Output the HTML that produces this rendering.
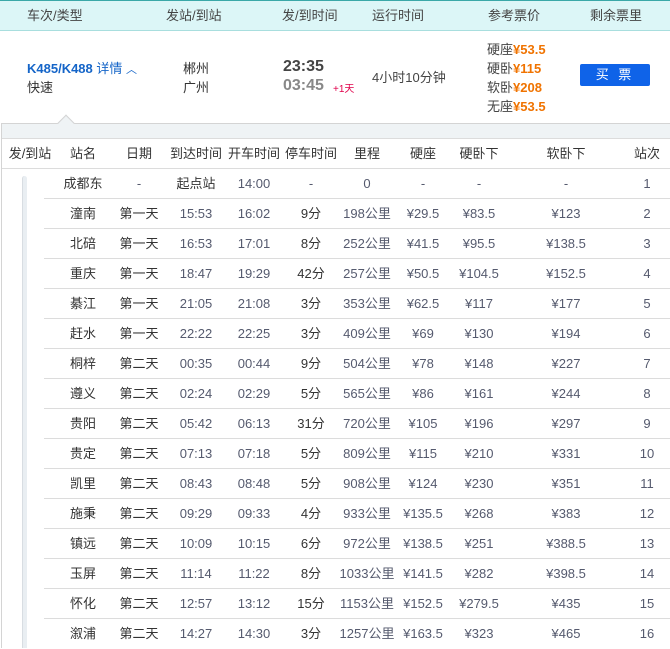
<!DOCTYPE html>
<html><head><meta charset="utf-8"><style>
*{margin:0;padding:0;box-sizing:border-box}
body{width:670px;height:648px;overflow:hidden;background:#fff;font-family:"Liberation Sans","Noto Sans CJK SC",sans-serif;font-size:13px;color:#333;position:relative}
.a{position:absolute;white-space:nowrap;line-height:19px}
.hd{position:absolute;left:0;top:0;width:670px;height:31px;background:#dcf6f7;border-top:1px solid #3aa8a8;border-bottom:1px solid #a8dede}
.hd span{position:absolute;top:0;line-height:30px;color:#444;font-size:13px}
.row{position:absolute;left:0;width:670px;height:30px}
.row span{position:absolute;top:0;line-height:30px;height:30px;width:100px;text-align:center;color:#555a6e}
.row span.n{color:#333}
.c1{left:-20px}.c2{left:33px}.c3{left:89px}.c4{left:146px}.c5{left:204px}.c6{left:261px}.c7{left:317px}.c8{left:373px}.c9{left:429px}.c10{left:516px}.c11{left:597px}
.ln{position:absolute;left:44px;width:626px;height:1px;background:#dcdcdc}
.pr b{color:#f07300}
</style></head><body>
<div class="hd">
<span style="left:27px">车次/类型</span>
<span style="left:166px">发站/到站</span>
<span style="left:282px">发/到时间</span>
<span style="left:372px">运行时间</span>
<span style="left:488px">参考票价</span>
<span style="left:590px">剩余票里</span>
</div>
<div class="a" style="left:27px;top:59px;color:#1565c8;font-weight:bold">K485/K488 <span style="font-weight:normal">详情</span> <span style="font-weight:normal;font-size:11px">︿</span></div>
<div class="a" style="left:27px;top:78px">快速</div>
<div class="a" style="left:183px;top:59px">郴州</div>
<div class="a" style="left:183px;top:78px">广州</div>
<div class="a" style="left:283px;top:57px;font-size:16px;font-weight:bold;color:#444">23:35</div>
<div class="a" style="left:283px;top:76px;font-size:16px;font-weight:bold;color:#888">03:45</div>
<div class="a" style="left:333px;top:80px;font-size:10px;color:#e0004a">+1天</div>
<div class="a" style="left:372px;top:68px;color:#444">4小时10分钟</div>
<div class="a pr" style="left:487px;top:40px;line-height:19px;color:#444">硬座<b>¥53.5</b><br>硬卧<b>¥115</b><br>软卧<b>¥208</b><br>无座<b>¥53.5</b></div>
<div class="a" style="left:580px;top:64px;width:70px;height:22px;background:#0f63e8;border-radius:2px;color:#fff;text-align:center;line-height:22px;letter-spacing:3px">买 票</div>
<div class="a" style="left:1px;top:123px;width:669px;height:16px;background:#eff3f5;border-top:1px solid #d4d4d4;border-bottom:1px solid #dcdcdc"></div>
<div class="a" style="left:60px;top:117px;width:12px;height:12px;background:#eff3f5;border-left:1px solid #d4d4d4;border-top:1px solid #d4d4d4;transform:rotate(45deg)"></div>
<div class="a" style="left:1px;top:123px;width:1px;height:525px;background:#d4d4d4"></div>
<div class="row" style="top:139px;border-bottom:1px solid #dcdcdc;left:2px;width:668px">
<span class="c1 n" style="left:-22px">发/到站</span><span class="c2 n" style="left:31px">站名</span><span class="c3 n" style="left:87px">日期</span><span class="c4 n" style="left:144px">到达时间</span><span class="c5 n" style="left:202px">开车时间</span><span class="c6 n" style="left:259px">停车时间</span><span class="c7 n" style="left:315px">里程</span><span class="c8 n" style="left:371px">硬座</span><span class="c9 n" style="left:427px">硬卧下</span><span class="c10 n" style="left:514px">软卧下</span><span class="c11 n" style="left:595px">站次</span>
</div>
<div class="a" style="left:22px;top:176px;width:5px;height:472px;background:#e9eef2;border-left:1px solid #d8dde2;border-radius:3px 3px 0 0"></div>
<div class="row" style="top:169px"><span class="c2 n">成都东</span><span class="c3">-</span><span class="c4 n">起点站</span><span class="c5">14:00</span><span class="c6">-</span><span class="c7">0</span><span class="c8">-</span><span class="c9">-</span><span class="c10">-</span><span class="c11">1</span></div><div class="ln" style="top:198px"></div>
<div class="row" style="top:199px"><span class="c2 n">潼南</span><span class="c3 n">第一天</span><span class="c4">15:53</span><span class="c5">16:02</span><span class="c6 n">9分</span><span class="c7">198公里</span><span class="c8">¥29.5</span><span class="c9">¥83.5</span><span class="c10">¥123</span><span class="c11">2</span></div><div class="ln" style="top:228px"></div>
<div class="row" style="top:229px"><span class="c2 n">北碚</span><span class="c3 n">第一天</span><span class="c4">16:53</span><span class="c5">17:01</span><span class="c6 n">8分</span><span class="c7">252公里</span><span class="c8">¥41.5</span><span class="c9">¥95.5</span><span class="c10">¥138.5</span><span class="c11">3</span></div><div class="ln" style="top:258px"></div>
<div class="row" style="top:259px"><span class="c2 n">重庆</span><span class="c3 n">第一天</span><span class="c4">18:47</span><span class="c5">19:29</span><span class="c6 n">42分</span><span class="c7">257公里</span><span class="c8">¥50.5</span><span class="c9">¥104.5</span><span class="c10">¥152.5</span><span class="c11">4</span></div><div class="ln" style="top:288px"></div>
<div class="row" style="top:289px"><span class="c2 n">綦江</span><span class="c3 n">第一天</span><span class="c4">21:05</span><span class="c5">21:08</span><span class="c6 n">3分</span><span class="c7">353公里</span><span class="c8">¥62.5</span><span class="c9">¥117</span><span class="c10">¥177</span><span class="c11">5</span></div><div class="ln" style="top:318px"></div>
<div class="row" style="top:319px"><span class="c2 n">赶水</span><span class="c3 n">第一天</span><span class="c4">22:22</span><span class="c5">22:25</span><span class="c6 n">3分</span><span class="c7">409公里</span><span class="c8">¥69</span><span class="c9">¥130</span><span class="c10">¥194</span><span class="c11">6</span></div><div class="ln" style="top:348px"></div>
<div class="row" style="top:349px"><span class="c2 n">桐梓</span><span class="c3 n">第二天</span><span class="c4">00:35</span><span class="c5">00:44</span><span class="c6 n">9分</span><span class="c7">504公里</span><span class="c8">¥78</span><span class="c9">¥148</span><span class="c10">¥227</span><span class="c11">7</span></div><div class="ln" style="top:378px"></div>
<div class="row" style="top:379px"><span class="c2 n">遵义</span><span class="c3 n">第二天</span><span class="c4">02:24</span><span class="c5">02:29</span><span class="c6 n">5分</span><span class="c7">565公里</span><span class="c8">¥86</span><span class="c9">¥161</span><span class="c10">¥244</span><span class="c11">8</span></div><div class="ln" style="top:408px"></div>
<div class="row" style="top:409px"><span class="c2 n">贵阳</span><span class="c3 n">第二天</span><span class="c4">05:42</span><span class="c5">06:13</span><span class="c6 n">31分</span><span class="c7">720公里</span><span class="c8">¥105</span><span class="c9">¥196</span><span class="c10">¥297</span><span class="c11">9</span></div><div class="ln" style="top:438px"></div>
<div class="row" style="top:439px"><span class="c2 n">贵定</span><span class="c3 n">第二天</span><span class="c4">07:13</span><span class="c5">07:18</span><span class="c6 n">5分</span><span class="c7">809公里</span><span class="c8">¥115</span><span class="c9">¥210</span><span class="c10">¥331</span><span class="c11">10</span></div><div class="ln" style="top:468px"></div>
<div class="row" style="top:469px"><span class="c2 n">凯里</span><span class="c3 n">第二天</span><span class="c4">08:43</span><span class="c5">08:48</span><span class="c6 n">5分</span><span class="c7">908公里</span><span class="c8">¥124</span><span class="c9">¥230</span><span class="c10">¥351</span><span class="c11">11</span></div><div class="ln" style="top:498px"></div>
<div class="row" style="top:499px"><span class="c2 n">施秉</span><span class="c3 n">第二天</span><span class="c4">09:29</span><span class="c5">09:33</span><span class="c6 n">4分</span><span class="c7">933公里</span><span class="c8">¥135.5</span><span class="c9">¥268</span><span class="c10">¥383</span><span class="c11">12</span></div><div class="ln" style="top:528px"></div>
<div class="row" style="top:529px"><span class="c2 n">镇远</span><span class="c3 n">第二天</span><span class="c4">10:09</span><span class="c5">10:15</span><span class="c6 n">6分</span><span class="c7">972公里</span><span class="c8">¥138.5</span><span class="c9">¥251</span><span class="c10">¥388.5</span><span class="c11">13</span></div><div class="ln" style="top:558px"></div>
<div class="row" style="top:559px"><span class="c2 n">玉屏</span><span class="c3 n">第二天</span><span class="c4">11:14</span><span class="c5">11:22</span><span class="c6 n">8分</span><span class="c7">1033公里</span><span class="c8">¥141.5</span><span class="c9">¥282</span><span class="c10">¥398.5</span><span class="c11">14</span></div><div class="ln" style="top:588px"></div>
<div class="row" style="top:589px"><span class="c2 n">怀化</span><span class="c3 n">第二天</span><span class="c4">12:57</span><span class="c5">13:12</span><span class="c6 n">15分</span><span class="c7">1153公里</span><span class="c8">¥152.5</span><span class="c9">¥279.5</span><span class="c10">¥435</span><span class="c11">15</span></div><div class="ln" style="top:618px"></div>
<div class="row" style="top:619px"><span class="c2 n">溆浦</span><span class="c3 n">第二天</span><span class="c4">14:27</span><span class="c5">14:30</span><span class="c6 n">3分</span><span class="c7">1257公里</span><span class="c8">¥163.5</span><span class="c9">¥323</span><span class="c10">¥465</span><span class="c11">16</span></div>
</body></html>
